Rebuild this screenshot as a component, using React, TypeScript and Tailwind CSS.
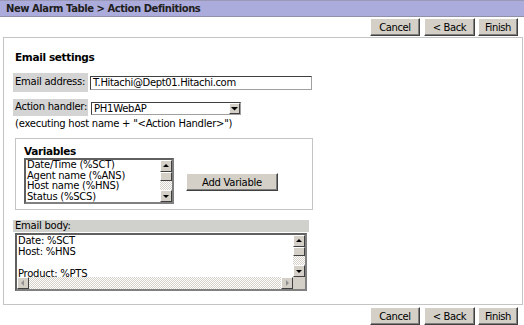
import React from "react";

const font = { fontFamily: '"DejaVu Sans", Verdana, sans-serif' };

function Btn({ label, w }: { label: string; w: string }) {
  return (
    <div
      className={`${w} h-[18px] flex items-center justify-center bg-[#d4d0c8] border border-t-white border-l-white border-r-[#404040] border-b-[#404040] shadow-[inset_-1px_-1px_0_#808080] text-[10px] tracking-[-0.4px] text-black`}
    >
      {label}
    </div>
  );
}

function ButtonRow() {
  return (
    <div className="flex justify-end pr-[6px]">
      <div className="w-[50px]"><Btn label="Cancel" w="w-[50px]" /></div>
      <div className="w-[51px] ml-[4px]"><Btn label="< Back" w="w-[51px]" /></div>
      <div className="w-[40px] ml-[3px]"><Btn label="Finish" w="w-[40px]" /></div>
    </div>
  );
}

function Arrow({ dir }: { dir: "up" | "down" | "left" | "right" }) {
  const pts =
    dir === "up"
      ? "2,6 5,3 8,6"
      : dir === "down"
      ? "2,4 5,7 8,4"
      : dir === "left"
      ? "6,2 3,5 6,8"
      : "4,2 7,5 4,8";
  return (
    <div className="w-[12px] h-[12px] bg-[#d4d0c8] border border-t-white border-l-white border-r-[#404040] border-b-[#404040] flex items-center justify-center">
      <svg width="10" height="10" viewBox="0 0 10 10">
        <polygon points={pts} fill={dir === "left" || dir === "right" ? "#909090" : "#000"} />
      </svg>
    </div>
  );
}

const track =
  "bg-[repeating-conic-gradient(#d4d0c8_0_25%,#ffffff_0_50%)] bg-[length:2px_2px]";

function VScroll() {
  return (
    <div className="w-[12px] h-full flex flex-col">
      <Arrow dir="up" />
      <div className="w-[12px] h-[9px] bg-[#d4d0c8] border border-t-white border-l-white border-r-[#404040] border-b-[#404040]" />
      <div className={`flex-1 ${track}`} />
      <Arrow dir="down" />
    </div>
  );
}

export default function App() {
  return (
    <div
      style={font}
      className="w-[524px] h-[325px] bg-white overflow-hidden text-black flex flex-col"
    >
      <div className="h-[17px] bg-[#acacdc] border-t border-t-[#9a9ab8] border-b border-b-[#9090a8] pl-[6px] flex items-center text-[10px] font-bold tracking-[-0.45px] text-[#202020]">
        New Alarm Table &gt; Action Definitions
      </div>
      <div className="pt-[1px]">
        <ButtonRow />
      </div>
      <div className="mt-[1px] ml-[3px] mr-[1px] h-[268px] border border-[#c4c4c4] pl-[9px] flex flex-col text-[10px] tracking-[-0.25px]">
        <div className="pt-[13px] pl-[2px] font-bold text-[10.5px] leading-[13px] tracking-[-0.35px]">Email settings</div>
        <div className="mt-[9px] flex items-start">
          <div className="w-[75px] h-[19px] bg-[#d4d4d4] pl-[2px] pt-[2px] leading-[13px]">Email address:</div>
          <div className="ml-[2px] mt-[3px] w-[222px] h-[14px] border border-t-[#404040] border-l-[#404040] border-r-[#a0a0a0] border-b-[#a0a0a0] pl-[2px] leading-[12px] bg-white tracking-[-0.35px]">
            T.Hitachi@Dept01.Hitachi.com
          </div>
        </div>
        <div className="mt-[7px] flex items-start">
          <div className="w-[75px] h-[17px] bg-[#d4d4d4] pl-[2px] pt-[1px] leading-[13px]">Action handler:</div>
          <div className="ml-[3px] mt-[3px] w-[150px] h-[13px] border border-t-[#404040] border-l-[#404040] border-r-[#a0a0a0] border-b-[#a0a0a0] flex bg-white">
            <div className="flex-1 pl-[2px] leading-[11px]">PH1WebAP</div>
            <div className="w-[11px] h-[11px] bg-[#d4d0c8] border border-t-white border-l-white border-r-[#404040] border-b-[#404040] flex items-center justify-center">
              <svg width="7" height="5" viewBox="0 0 7 5"><polygon points="0,1 7,1 3.5,4.5" fill="#000" /></svg>
            </div>
          </div>
        </div>
        <div className="mt-[1px] pl-[2px] leading-[13px]">(executing host name + "&lt;Action Handler&gt;")</div>
        <div className="mt-[8px] ml-[2px] w-[298px] h-[72px] border border-[#c4c4c4] pl-[8px] flex flex-col">
          <div className="pt-[6px] font-bold text-[10.5px] leading-[13px] tracking-[-0.35px]">Variables</div>
          <div className="mt-[0px] flex items-start">
            <div className="w-[150px] h-[46px] border-2 border-t-[#606060] border-l-[#606060] border-r-[#808080] border-b-[#808080] flex bg-white">
              <div className="flex-1 pl-[1px] leading-[10.5px] overflow-hidden">
                <div>Date/Time (%SCT)</div>
                <div>Agent name (%ANS)</div>
                <div>Host name (%HNS)</div>
                <div>Status (%SCS)</div>
              </div>
              <VScroll />
            </div>
            <div className="ml-[12px] mt-[15px] w-[92px] h-[18px] flex items-center justify-center bg-[#d4d0c8] border border-t-white border-l-white border-r-[#404040] border-b-[#404040] shadow-[inset_-1px_-1px_0_#808080]">
              Add Variable
            </div>
          </div>
        </div>
        <div className="mt-[10px] w-[296px] h-[12px] bg-[#d0d0cc] pl-[2px] leading-[12px]">Email body:</div>
        <div className="mt-[1px] ml-[2px] w-[292px] h-[58px] border-2 border-t-[#606060] border-l-[#606060] border-r-[#808080] border-b-[#808080] flex flex-col bg-white">
          <div className="flex flex-1 min-h-0">
            <div className="flex-1 pl-[1px] leading-[11px]">
              <div>Date: %SCT</div>
              <div>Host: %HNS</div>
              <div>&nbsp;</div>
              <div>Product: %PTS</div>
            </div>
            <VScroll />
          </div>
          <div className="h-[12px] flex">
            <Arrow dir="left" />
            <div className={`flex-1 ${track}`} />
            <Arrow dir="right" />
            <div className="w-[12px] h-[12px] bg-[#d4d0c8]" />
          </div>
        </div>
      </div>
      <div className="pt-[2px]">
        <ButtonRow />
      </div>
    </div>
  );
}
